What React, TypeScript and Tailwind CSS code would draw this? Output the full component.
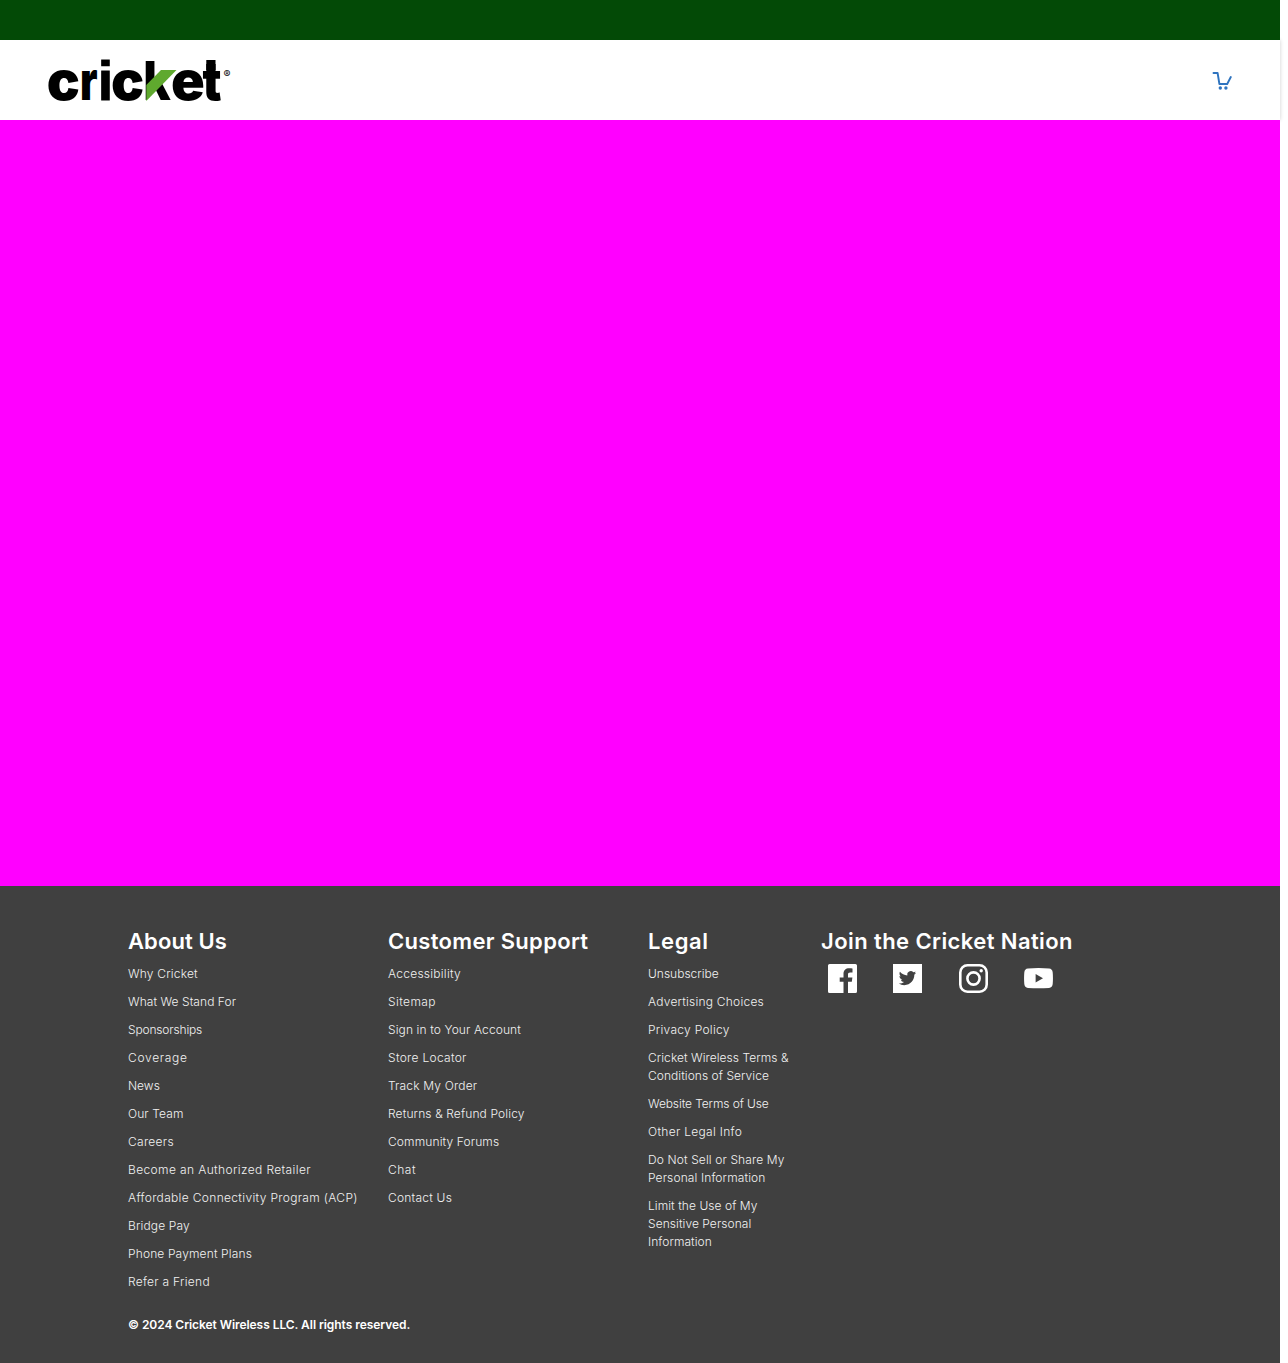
type Item = { text: string; tracking?: string };

const about: Item[] = [
  { text: 'Why Cricket', tracking: 'tracking-[0.18px]' },
  { text: 'What We Stand For', tracking: 'tracking-[0.06px]' },
  { text: 'Sponsorships', tracking: 'tracking-[-0.16px]' },
  { text: 'Coverage', tracking: 'tracking-[0.7px]' },
  { text: 'News' },
  { text: 'Our Team', tracking: 'tracking-[0.1px]' },
  { text: 'Careers', tracking: 'tracking-[0.3px]' },
  { text: 'Become an Authorized Retailer', tracking: 'tracking-[0.38px]' },
  { text: 'Affordable Connectivity Program (ACP)', tracking: 'tracking-[0.33px]' },
  { text: 'Bridge Pay', tracking: 'tracking-[0.15px]' },
  { text: 'Phone Payment Plans', tracking: 'tracking-[0.14px]' },
  { text: 'Refer a Friend', tracking: 'tracking-[0.28px]' },
];

const support: Item[] = [
  { text: 'Accessibility', tracking: 'tracking-[0.25px]' },
  { text: 'Sitemap', tracking: 'tracking-[0.4px]' },
  { text: 'Sign in to Your Account', tracking: 'tracking-[0.11px]' },
  { text: 'Store Locator', tracking: 'tracking-[0.3px]' },
  { text: 'Track My Order', tracking: 'tracking-[0.17px]' },
  { text: 'Returns & Refund Policy', tracking: 'tracking-[0.13px]' },
  { text: 'Community Forums', tracking: 'tracking-[0.12px]' },
  { text: 'Chat', tracking: 'tracking-[0.5px]' },
  { text: 'Contact Us', tracking: 'tracking-[0.22px]' },
];

const legal: Item[] = [
  { text: 'Unsubscribe' },
  { text: 'Advertising Choices', tracking: 'tracking-[0.22px]' },
  { text: 'Privacy Policy', tracking: 'tracking-[0.28px]' },
  { text: 'Cricket Wireless Terms &\nConditions of Service', tracking: 'tracking-[0.05px]' },
  { text: 'Website Terms of Use', tracking: 'tracking-[-0.1px]' },
  { text: 'Other Legal Info', tracking: 'tracking-[0.3px]' },
  { text: 'Do Not Sell or Share My\nPersonal Information', tracking: 'tracking-[0.12px]' },
  { text: 'Limit the Use of My\nSensitive Personal\nInformation', tracking: 'tracking-[0.06px]' },
];

function Logo() {
  const letters = [
    { c: 'c', x: 46.8, w: 33.2 },
    { c: 'r', x: 80, w: 17.6 },
    { c: 'i', x: 98, w: 15, square: true },
    { c: 'c', x: 111, w: 33.2 },
    { c: 'k', x: 143.6, w: 27 },
    { c: 'e', x: 171, w: 33.8 },
    { c: 't', x: 202.5, w: 19 },
  ];
  return (
    <svg
      className="h-[60px] w-[200px] overflow-visible font-['Inter',sans-serif]"
      viewBox="40 50 200 60"
      role="img"
      aria-label="cricket"
    >
      {letters.map((l) => (
        <text
          key={l.x}
          className={l.square ? "font-['Liberation_Sans',sans-serif]" : undefined}
          x={l.x}
          y="100.300"
          fontSize={l.square ? 56 : 54}
          fontWeight="900"
          textLength={l.w}
          lengthAdjust="spacingAndGlyphs"
          fill="#000"
          stroke="#000"
          strokeWidth={l.square ? 1.2 : 0}
        >
          {l.c}
        </text>
      ))}
      <rect x="206.300" y="60" width="9.200" height="10" />
      <path d="M145 101.500 154 91 160 101.500Z" fill="#fff" />
      <path d="M146.300 85 161 70H176.500L146.300 101Z" fill="#5fa92e" />
      <text x="223.500" y="77.500" fontSize="10.500" fontWeight="500" fill="#111">®</text>
    </svg>
  );
}

function CartIcon() {
  return (
    <svg className="h-5 w-5" viewBox="0 0 20 20" fill="none" stroke="#2f74bf" strokeWidth="1.900">
      <path d="M1.500 3H5.600L7.400 14H15.200L18.800 7" strokeLinecap="round" strokeLinejoin="round" />
      <circle cx="8.300" cy="18" r="1.700" fill="#2f74bf" stroke="none" />
      <circle cx="13.900" cy="18" r="1.700" fill="#2f74bf" stroke="none" />
    </svg>
  );
}

function Column({ title, tracking, items }: { title: string; tracking: string; items: Item[] }) {
  return (
    <section>
      <h2 className={`text-[22px] leading-[30px] font-semibold whitespace-nowrap ${tracking}`}>{title}</h2>
      <ul className="mt-[9px] flex flex-col gap-[10px] text-xs leading-[18px] font-light text-[#f2f2f2]">
        {items.map((item) => (
          <li key={item.text} className={`whitespace-pre ${item.tracking ?? ''}`}>
            <a href="#">{item.text}</a>
          </li>
        ))}
      </ul>
    </section>
  );
}

function Social() {
  return (
    <section>
      <h2 className="text-[22px] leading-[30px] font-semibold tracking-[0.41px] whitespace-nowrap">
        Join the Cricket Nation
      </h2>
      <div className="mt-[8px] ml-[7px] flex gap-[36.300px]">
        <svg className="size-[29px]" viewBox="0 0 29 29" fill="#fff">
          <path d="M1.600 0H27.400Q29 0 29 1.600V27.400Q29 29 27.400 29H20V17.800H23.800L24.400 13.400H20V10.600C20 9.300 20.400 8.400 22.200 8.400H24.500V4.500C24.100 4.400 22.700 4.300 21.100 4.300C17.800 4.300 15.500 6.300 15.500 10.100V13.400H11.700V17.800H15.500V29H1.600Q0 29 0 27.400V1.600Q0 0 1.600 0Z" />
        </svg>
        <svg className="size-[29px]" viewBox="0 0 29 29">
          <path d="M0 0H29V29H0Z" fill="#fff" />
          <path
            transform="translate(5.800 5.500) scale(.72)"
            fill="#404040"
            d="M23.953 4.570a10 10 0 01-2.825.775 4.958 4.958 0 002.163-2.723c-.951.555-2.005.959-3.127 1.184a4.920 4.920 0 00-8.384 4.482C7.690 8.095 4.067 6.130 1.640 3.162a4.822 4.822 0 00-.666 2.475c0 1.710.870 3.213 2.188 4.096a4.904 4.904 0 01-2.228-.616v.060a4.923 4.923 0 003.946 4.827 4.996 4.996 0 01-2.212.085 4.936 4.936 0 004.604 3.417 9.867 9.867 0 01-6.102 2.105c-.390 0-.779-.023-1.170-.067a13.995 13.995 0 007.557 2.209c9.053 0 13.998-7.496 13.998-13.985 0-.210 0-.420-.015-.630A9.935 9.935 0 0024 4.590z"
          />
        </svg>
        <svg className="size-[29px]" viewBox="0 0 29 29" fill="none" stroke="#fff" strokeWidth="2.600">
          <rect x="1.300" y="1.300" width="26.400" height="26.400" rx="7.200" />
          <circle cx="14.500" cy="14.500" r="6.100" />
          <circle cx="22.200" cy="6.800" r="1.700" fill="#fff" stroke="none" />
        </svg>
        <svg className="size-[29px]" viewBox="0 0 29 29">
          <path d="M4 4.500Q14.500 3.700 25 4.500Q28.400 4.800 28.700 8.500Q29.200 14.300 28.700 20Q28.400 23.600 25 23.900Q14.500 24.700 4 23.900Q.6 23.600.3 20Q-.2 14.300.3 8.500Q.6 4.800 4 4.500Z" fill="#fff" />
          <path d="M11.600 10V18.500L19 14.200Z" fill="#404040" />
        </svg>
      </div>
    </section>
  );
}

export default function App() {
  return (
    <div className="min-h-[1363px] w-[1288px] bg-white font-['Inter',sans-serif]">
      <div className="flex w-[1280px] flex-col">
        <div className="relative h-10 bg-[#034a06]" />
        <header className="flex h-20 items-center justify-between bg-white pr-12 pl-10 shadow-[0_0_4px_rgba(0,0,0,0.2)]">
          <Logo />
          <CartIcon />
        </header>
        <main className="relative h-[766px] bg-[#ff00ff]" />
        <footer className="h-[477px] bg-[#404040] pt-10 pl-32 text-white">
          <div className="grid h-[390px] grid-cols-[260px_260px_173px_1fr]">
            <Column title="About Us" tracking="tracking-[0.1px]" items={about} />
            <Column title="Customer Support" tracking="tracking-[0.32px]" items={support} />
            <Column title="Legal" tracking="tracking-[0.6px]" items={legal} />
            <Social />
          </div>
          <p className="text-xs leading-[18px] font-semibold tracking-[-0.05px]">
            © 2024 Cricket Wireless LLC. All rights reserved.
          </p>
        </footer>
      </div>
    </div>
  );
}
